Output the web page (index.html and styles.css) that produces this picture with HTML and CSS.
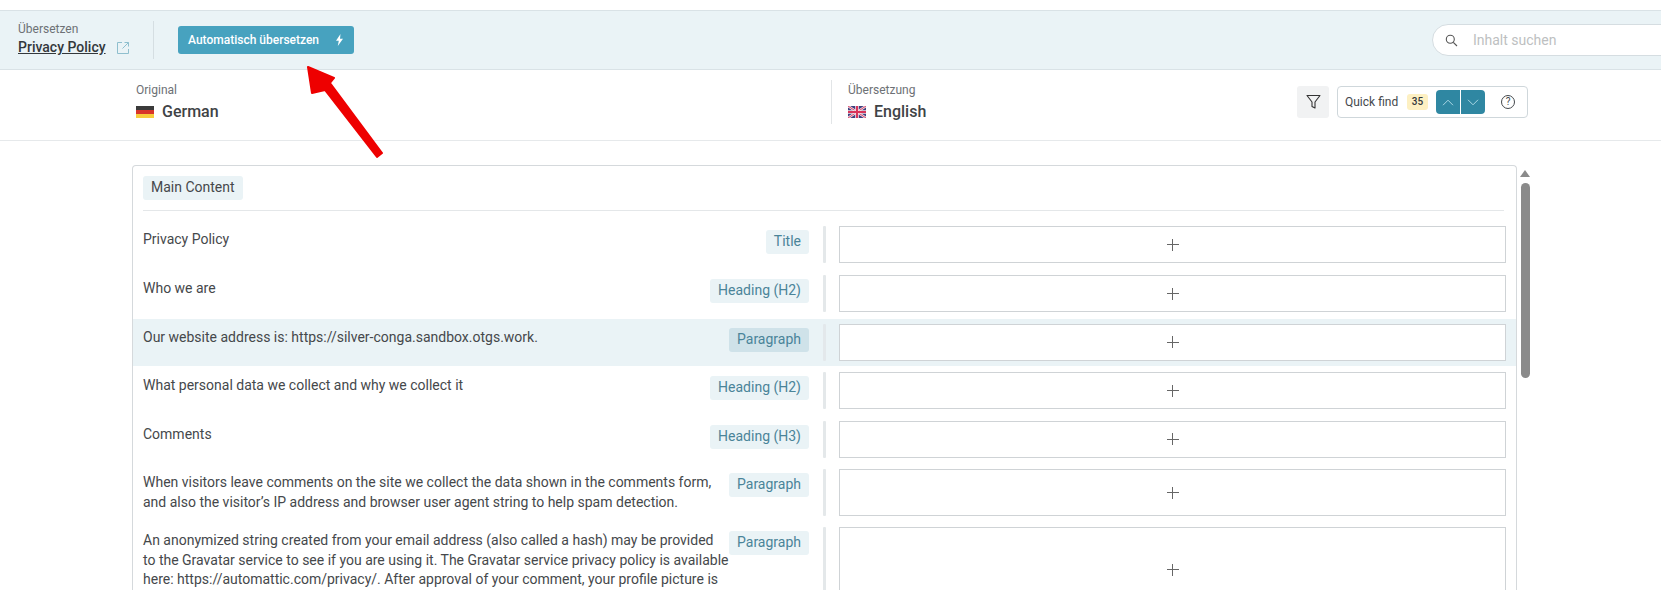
FILE: index.html
```html
<!DOCTYPE html>
<html lang="de">
<head>
<meta charset="utf-8">
<title>Übersetzen</title>
<link rel="stylesheet" href="styles.css">
</head>
<body>
<header class="topbar">
  <div class="crumb">
    <span class="crumb-label">Übersetzen</span>
    <span class="crumb-title"><a class="crumb-link">Privacy Policy</a>
      <svg class="ext" width="14" height="14" viewBox="0 0 14 14" fill="none" stroke="#8fbfce" stroke-width="1"><path d="M6 1.5H1.5v11h11V8"/><path d="M8.5 1.5h4v4M12.5 1.5L6.5 7.5"/></svg>
    </span>
  </div>
  <div class="vsep"></div>
  <button class="auto-btn"><span>Automatisch übersetzen</span>
    <svg width="9" height="12" viewBox="0 0 9 12" fill="#fff"><path d="M5.5 0L1 6.8h2.8L2.8 12 8 4.8H5L5.5 0z"/></svg>
  </button>
  <div class="search">
    <svg width="13" height="13" viewBox="0 0 13 13" fill="none" stroke="#555" stroke-width="1.1"><circle cx="5.3" cy="5.3" r="4"/><path d="M8.3 8.3L12 12"/></svg>
    <span>Inhalt suchen</span>
  </div>
</header>

<section class="langbar">
  <div class="lang lang-src">
    <span class="lang-label">Original</span>
    <span class="lang-name">
      <svg class="flag" width="18" height="12" viewBox="0 0 18 12"><rect width="18" height="4" fill="#3a3a3a"/><rect y="4" width="18" height="4" fill="#d8352a"/><rect y="8" width="18" height="4" fill="#f8cc3c"/></svg>
      German</span>
  </div>
  <div class="lang lang-tgt">
    <span class="lang-label">Übersetzung</span>
    <span class="lang-name">
      <svg class="flag" width="18" height="12" viewBox="0 0 18 12"><rect width="18" height="12" fill="#3d3f7e"/><path d="M0 0L18 12M18 0L0 12" stroke="#f3dfe6" stroke-width="2.4"/><path d="M0 0L18 12M18 0L0 12" stroke="#d8345a" stroke-width=".9"/><path d="M9 0V12M0 6H18" stroke="#f3dfe6" stroke-width="3.6"/><path d="M9 0V12M0 6H18" stroke="#d8345a" stroke-width="2"/></svg>
      English</span>
  </div>
  <div class="tools">
    <button class="filter-btn">
      <svg width="15" height="16" viewBox="0 0 15 16" fill="none" stroke="#333" stroke-width="1.1" stroke-linejoin="round"><path d="M1 1.5h13L9 8v6l-3 -1.6V8z"/></svg>
    </button>
    <div class="quick">
      <span class="quick-label">Quick find</span>
      <span class="quick-count">35</span>
      <span class="quick-nav">
        <span class="nav-btn"><svg width="12" height="7" viewBox="0 0 12 7" fill="none" stroke="#a9d6e3" stroke-width="1"><path d="M1 6.2l5-5 5 5"/></svg></span>
        <span class="nav-btn"><svg width="12" height="7" viewBox="0 0 12 7" fill="none" stroke="#a9d6e3" stroke-width="1"><path d="M1 .8l5 5 5-5"/></svg></span>
      </span>
      <span class="quick-help">?</span>
    </div>
  </div>
</section>

<main class="workspace">
  <div class="panel">
    <div class="panel-head"><span class="chip">Main Content</span></div>

    <div class="row r1">
      <p class="src">Privacy Policy</p><span class="tag">Title</span>
      <div class="bar"></div><div class="box"><span class="plus"></span></div>
    </div>
    <div class="row r2">
      <p class="src">Who we are</p><span class="tag">Heading (H2)</span>
      <div class="bar"></div><div class="box"><span class="plus"></span></div>
    </div>
    <div class="row r2 active">
      <p class="src">Our website address is: https://silver-conga.sandbox.otgs.work.</p><span class="tag">Paragraph</span>
      <div class="bar"></div><div class="box"><span class="plus"></span></div>
    </div>
    <div class="row r2">
      <p class="src">What personal data we collect and why we collect it</p><span class="tag">Heading (H2)</span>
      <div class="bar"></div><div class="box"><span class="plus"></span></div>
    </div>
    <div class="row r2">
      <p class="src">Comments</p><span class="tag">Heading (H3)</span>
      <div class="bar"></div><div class="box"><span class="plus"></span></div>
    </div>
    <div class="row r3">
      <p class="src">When visitors leave comments on the site we collect the data shown in the comments form,<br>and also the visitor’s IP address and browser user agent string to help spam detection.</p><span class="tag">Paragraph</span>
      <div class="bar"></div><div class="box"><span class="plus"></span></div>
    </div>
    <div class="row r4">
      <p class="src">An anonymized string created from your email address (also called a hash) may be provided<br>to the Gravatar service to see if you are using it. The Gravatar service privacy policy is available<br>here: https://automattic.com/privacy/. After approval of your comment, your profile picture is</p><span class="tag">Paragraph</span>
      <div class="bar"></div><div class="box"><span class="plus"></span></div>
    </div>
  </div>
  <div class="scrollbar"><span class="sb-arrow"></span><span class="sb-thumb"></span></div>
</main>

<svg class="arrow" width="90" height="100" viewBox="0 0 90 100"><path d="M1 2L27 13 23 18 75 88 70 92 18 25 5 28z" fill="#ee0000" stroke="#ee0000" stroke-width="2" stroke-linejoin="round"/></svg>
</body>
</html>
```
FILE: styles.css
```css
* { box-sizing: border-box; }
html, body { margin: 0; padding: 0; height: 590px; overflow: hidden; background: #fff; }
body { font-family: Roboto, "Liberation Sans", sans-serif; color: #45484b; font-size: 14px; position: relative; }

.topbar { margin-top: 10px; height: 60px; background: #eaf3f6; border-top: 1px solid #d9e2e6; border-bottom: 1px solid #d9e2e6; display: flex; align-items: center; padding-left: 18px; position: relative; }
.crumb { display: flex; flex-direction: column; width: 135px; gap: 1px; margin-top: -2px; }
.crumb-label { font-size: 12px; color: #6d7175; line-height: 15px; }
.crumb-title { display: flex; align-items: center; gap: 10px; line-height: 18px; }
.crumb-link { font-size: 14px; font-weight: 500; color: #33383c; text-decoration: underline; }
.ext { margin-top: 2px; }
.vsep { width: 1px; height: 38px; background: #d5dee2; }
.auto-btn { margin-left: 24px; width: 176px; height: 28px; background: #47a2bf; border: 0; border-radius: 3px; color: #fff; font: 500 12px Roboto, sans-serif; display: flex; align-items: center; justify-content: space-between; padding: 0 10px 0 10px; }
.search { position: absolute; left: 1432px; top: 13px; width: 300px; height: 32px; background: #fff; border: 1px solid #d5dde1; border-radius: 16px; display: flex; align-items: center; padding-left: 12px; gap: 15px; color: #bdbfc1; font-size: 14px; }

.langbar { height: 71px; border-bottom: 1px solid #e6e9eb; display: flex; position: relative; padding-left: 136px; }
.lang { display: flex; flex-direction: column; padding-top: 13px; gap: 4px; }
.lang-src { width: 695px; }
.lang-tgt { border-left: 1px solid #e2e5e7; padding-left: 16px; height: 44px; margin-top: 10px; padding-top: 3px; }
.lang-label { font-size: 12px; color: #6d7175; line-height: 15px; }
.lang-name { display: flex; align-items: center; gap: 8px; font-size: 16px; font-weight: 500; color: #3f4346; line-height: 20px; }
.flag { display: block; }
.tools { position: absolute; left: 1297px; top: 16px; display: flex; gap: 8px; }
.filter-btn { width: 32px; height: 32px; background: #f1f2f3; border: 0; border-radius: 3px; display: flex; align-items: center; justify-content: center; padding: 0; }
.quick { width: 191px; height: 32px; border: 1px solid #cfd7db; border-radius: 4px; display: flex; align-items: center; padding: 0 0 0 7px; }
.quick-label { font-size: 12px; color: #44484c; width: 62px; }
.quick-count { width: 21px; height: 16px; background: #fdf0c2; border-radius: 3px; font-size: 10px; font-weight: 500; text-align: center; line-height: 16px; color: #33383c; }
.quick-nav { margin-left: 8px; display: flex; gap: 1px; border-radius: 4px; overflow: hidden; }
.nav-btn { width: 24px; height: 24px; background: #2f87a2; display: flex; align-items: center; justify-content: center; }
.quick-help { margin-left: 16px; width: 14px; height: 14px; border: 1px solid #44484c; border-radius: 50%; font-size: 10px; line-height: 12px; text-align: center; color: #44484c; }

.workspace { position: relative; padding: 24px 0 0 132px; display: flex; }
.panel { width: 1385px; height: 500px; border: 1px solid #d5d9dc; border-bottom: 0; border-radius: 4px 4px 0 0; }
.panel-head { margin: 0 12px 0 10px; height: 45px; padding-top: 10px; border-bottom: 1px solid #e4e7e9; }
.chip { display: inline-block; height: 24px; line-height: 23px; padding: 0 8px; background: #eaf3f6; border-radius: 3px; color: #45484b; font-size: 14px; }

.row { display: grid; grid-template-columns: 586px 94px 3px 1fr; align-items: start; padding: 0 10px; margin-top: 1px; }
.r1 { height: 58px; margin-top: 0; padding-top: 15px; }
.r2 { height: 47.5px; padding-top: 5px; }
.r3 { height: 57px; padding-top: 5px; }
.r4 { height: 200px; padding-top: 5px; }
.active { background: #eaf3f6; }
.src { margin: 4px 0 0; font-size: 14px; line-height: 19.6px; color: #45484b; white-space: nowrap; }
.tag { justify-self: end; white-space: nowrap; height: 24px; line-height: 23px; padding: 0 8px; background: #eaf3f6; color: #4a8499; border-radius: 3px; font-size: 14px; margin: 4px 14px 0 0; }
.active .tag { background: #cfe2e9; }
.bar { width: 3px; background: #e4e8ea; border-radius: 1px; }
.active .bar { background: #e3e8eb; }
.box { height: 37px; margin-left: 13px; background: #fff; border: 1px solid #cfd3d6; display: flex; align-items: center; justify-content: center; }
.r3 .box { height: 47px; }
.r4 .box { height: 85px; }
.r1 .bar, .r2 .bar { height: 37px; }
.r3 .bar { height: 47px; }
.r4 .bar { height: 85px; }
.plus { width: 12px; height: 12px; background: linear-gradient(#666,#666) center / 12px 1px no-repeat, linear-gradient(#666,#666) center / 1px 12px no-repeat; }

.scrollbar { width: 12px; margin-left: 2px; display: flex; flex-direction: column; align-items: center; gap: 6px; padding-top: 5px; }
.sb-arrow { width: 0; height: 0; border-left: 5px solid transparent; border-right: 5px solid transparent; border-bottom: 7px solid #8a8a8a; }
.sb-thumb { width: 9px; height: 195px; background: #8a8a8a; border-radius: 5px; }

.arrow { position: absolute; left: 307px; top: 65px; }
```
